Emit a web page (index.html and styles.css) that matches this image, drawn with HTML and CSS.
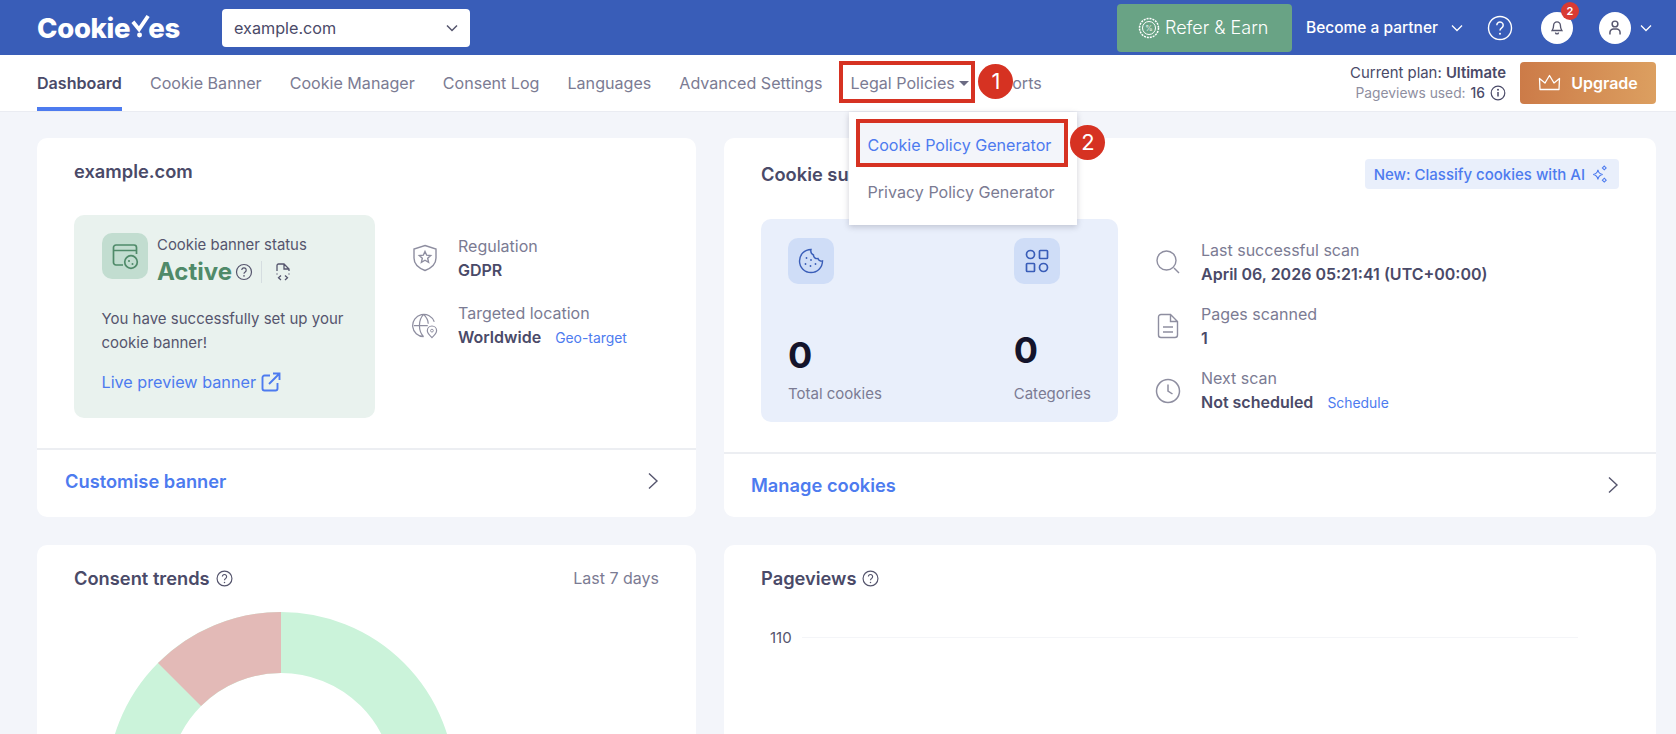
FILE: index.html
```html
<!DOCTYPE html>
<html>
	<head>
		<meta charset="utf-8">
		<title>CookieYes Dashboard</title>
		<link rel="stylesheet" href="styles.css">
	</head>
	<body>

		<header class="top-bar">
			<a class="logo">Cookie<svg class="logo-y" viewBox="0 0 20 24"><path d="M2 7l6.500 8L18 1" fill="none" stroke="#fff" stroke-width="4"/><circle cx="9" cy="21" r="2.600" fill="#fff"/></svg>es</a>
			<div class="site-select">
				<span>example.com</span>
				<svg class="chev" width="12" height="8" viewBox="0 0 12 8"><path d="M1 1.500l5 5 5-5" fill="none" stroke="#55556d" stroke-width="1.500"/></svg>
			</div>
			<div class="top-right">
				<a class="refer-btn">
					<svg width="22" height="22" viewBox="0 0 22 22"><circle cx="11" cy="11" r="9.500" fill="none" stroke="#fff" stroke-width="1.500" stroke-dasharray="2 1"/><circle cx="11" cy="11" r="6.500" fill="none" stroke="#fff"/><text x="11" y="14" text-anchor="middle" class="refer-pct">%</text></svg>
					Refer &amp; Earn
				</a>
				<a class="partner">Become a partner
					<svg class="chev" width="12" height="8" viewBox="0 0 12 8"><path d="M1 1.500l5 5 5-5" fill="none" stroke="#fff" stroke-width="1.300"/></svg>
				</a>
				<svg class="help-icon" width="26" height="26" viewBox="0 0 26 26"><circle cx="13" cy="13" r="11.500" fill="none" stroke="#fff" stroke-width="1.400"/><path d="M9.800 10.200a3.200 3.200 0 1 1 4.900 2.700c-1.100.7-1.700 1.300-1.700 2.600" fill="none" stroke="#fff" stroke-width="1.500"/><circle cx="13" cy="18.700" r="1" fill="#fff"/></svg>
				<div class="bell">
					<svg width="12" height="15" viewBox="0 0 16 18"><path d="M8 1.500a4.500 4.500 0 0 0-4.500 4.500c0 4-1 5.500-2 7h13c-1-1.500-2-3-2-7A4.500 4.500 0 0 0 8 1.500zM6 15.500a2 2 0 0 0 4 0" fill="none" stroke="#55556d" stroke-width="1.800"/></svg>
					<span class="bell-count">2</span>
				</div>
				<div class="avatar">
					<svg width="14" height="17" viewBox="0 0 18 20"><circle cx="9" cy="5.500" r="3.700" fill="none" stroke="#55556d" stroke-width="1.900"/><path d="M2.500 19v-2.500a4.500 4.500 0 0 1 4.500-4.500h4a4.500 4.500 0 0 1 4.500 4.500V19" fill="none" stroke="#55556d" stroke-width="1.900"/></svg>
				</div>
				<svg class="chev" width="12" height="8" viewBox="0 0 12 8"><path d="M1 1.500l5 5 5-5" fill="none" stroke="#fff" stroke-width="1.300"/></svg>
			</div>
		</header>

		<nav class="main-nav">
			<a class="nav-item nav-active">Dashboard</a>
			<a class="nav-item">Cookie Banner</a>
			<a class="nav-item">Cookie Manager</a>
			<a class="nav-item">Consent Log</a>
			<a class="nav-item">Languages</a>
			<a class="nav-item">Advanced Settings</a>
			<div class="nav-item nav-legal">
				Legal Policies<i class="caret"></i>
				<span class="mark-box mark-box-nav"></span>
				<span class="mark-num mark-num-1">1</span>
				<div class="legal-menu">
					<a class="legal-menu-item legal-menu-on">Cookie Policy Generator
						<span class="mark-box mark-box-menu"></span>
						<span class="mark-num mark-num-2">2</span>
					</a>
					<a class="legal-menu-item">Privacy Policy Generator</a>
				</div>
			</div>
			<a class="nav-item">Reports</a>

			<div class="plan-info">
				<p class="plan-name">Current plan: <b>Ultimate</b></p>
				<p class="plan-views">Pageviews used: <b>16</b>
					<svg width="16" height="16" viewBox="0 0 16 16"><circle cx="8" cy="8" r="6.800" fill="none" stroke="#4a4a68" stroke-width="1.200"/><path d="M8 7v4.500" stroke="#4a4a68" stroke-width="1.500"/><circle cx="8" cy="4.800" r="1" fill="#4a4a68"/></svg>
				</p>
			</div>
			<a class="upgrade-btn">
				<svg width="23" height="18" viewBox="0 0 23 18"><path d="M2 15.500L1.500 4.500l5.500 4.500 4.500-7.500 4.500 7.500 5.500-4.500-.5 11z" fill="none" stroke="#fff" stroke-width="1.300" stroke-linejoin="round"/></svg>
				Upgrade
			</a>
		</nav>

		<main class="dash-grid">

			<section class="card">
				<div class="card-main">
					<h2 class="card-title title-site">example.com</h2>
					<div class="site-row">
						<div class="status-panel">
							<div class="status-head">
								<div class="icon-tile tile-green">
									<svg width="28" height="28" viewBox="0 0 28 28"><path d="M12 23H5a2.500 2.500 0 0 1-2.500-2.500v-15A2.500 2.500 0 0 1 5 3h18a2.500 2.500 0 0 1 2.500 2.500V12M2.500 8.500h23" fill="none" stroke="#4f8a69" stroke-width="1.700"/><circle cx="20" cy="20" r="6.300" fill="none" stroke="#4f8a69" stroke-width="1.700"/><circle cx="18" cy="19" r="1" fill="#4f8a69"/><circle cx="21.500" cy="22" r="1" fill="#4f8a69"/></svg>
								</div>
								<div>
									<p class="status-label">Cookie banner status</p>
									<p class="status-value">Active
										<svg class="status-q" width="18" height="18" viewBox="0 0 18 18"><circle cx="9" cy="9" r="7.500" fill="none" stroke="#55556d" stroke-width="1.200"/><path d="M6.800 7a2.200 2.200 0 1 1 3.400 1.900c-.8.500-1.200.9-1.200 1.800" fill="none" stroke="#55556d" stroke-width="1.200"/><circle cx="9" cy="12.900" r=".8" fill="#55556d"/></svg>
										<i class="status-sep"></i>
										<svg width="16" height="18" viewBox="0 0 16 18"><path d="M2 8V2.500A1.500 1.500 0 0 1 3.500 1H9l5 5v2M9 1v5h5" fill="none" stroke="#55556d" stroke-width="1.300"/><path d="M2 10.500v1M14 10.500v1" stroke="#55556d" stroke-width="1.300"/><path d="M6 12.500l-2.500 2.300L6 17M10 12.500l2.500 2.300L10 17" fill="none" stroke="#55556d" stroke-width="1.300"/></svg>
									</p>
								</div>
							</div>
							<p class="status-text">You have successfully set up your cookie banner!</p>
							<a class="status-link">Live preview banner
								<svg width="20" height="20" viewBox="0 0 20 20"><path d="M9 3.500H3.500a2 2 0 0 0-2 2v11a2 2 0 0 0 2 2h11a2 2 0 0 0 2-2V11M8 12L18.500 1.500M12 1.500h6.500V8" fill="none" stroke="#4d7bef" stroke-width="1.900"/></svg>
							</a>
						</div>
						<div class="info-list info-site">
							<div class="info-row">
								<svg class="info-icon" width="26" height="28" viewBox="0 0 26 28"><path d="M13 1.500l11 3.500v9c0 6-4.500 10-11 12.500C6.500 24 2 20 2 14V5z" fill="none" stroke="#8e8ea0" stroke-width="1.400"/><path d="M13 7.500l1.700 3.700 4 .4-3 2.700.9 4L13 16.200l-3.600 2.100.9-4-3-2.700 4-.4z" fill="none" stroke="#8e8ea0" stroke-width="1.400"/></svg>
								<div>
									<p class="info-label">Regulation</p>
									<p class="info-value">GDPR</p>
								</div>
							</div>
							<div class="info-row">
								<svg class="info-icon" width="26" height="26" viewBox="0 0 28 28"><path d="M24 9.500A12 12 0 1 0 12.500 25.500M2 13.500h15M12.500 1.500c-6 6-6 18 0 24M12.500 1.500c3.500 3.500 5 7.500 5 10" fill="none" stroke="#8e8ea0" stroke-width="1.300"/><path d="M21.500 26.500c-3-3-5-5-5-7.500a5 5 0 0 1 10 0c0 2.500-2 4.500-5 7.500z" fill="none" stroke="#8e8ea0" stroke-width="1.300"/><circle cx="21.500" cy="19" r="1.500" fill="none" stroke="#8e8ea0"/></svg>
								<div>
									<p class="info-label">Targeted location</p>
									<p class="info-value">Worldwide <a class="info-link">Geo-target</a></p>
								</div>
							</div>
						</div>
					</div>
				</div>
				<a class="card-foot foot-site">Customise banner
					<svg width="12" height="18" viewBox="0 0 12 18"><path d="M2 1.500L10 9l-8 7.500" fill="none" stroke="#55556d" stroke-width="1.400"/></svg>
				</a>
			</section>

			<section class="card">
				<div class="card-main card-main-scan">
					<div class="scan-head">
						<h2 class="card-title">Cookie summary</h2>
						<span class="ai-pill">New: Classify cookies with AI
							<svg width="17" height="18" viewBox="0 0 16 17"><path d="M6.500 4.500c.5 3 1.500 4 4.500 4.500-3 .5-4 1.500-4.500 4.500C6 10.500 5 9.500 2 9c3-.5 4-1.500 4.500-4.500z" fill="none" stroke="#4d7bef" stroke-width="1.100"/><path d="M12.500 1l1.800 1.800-1.800 1.800-1.800-1.800zM12.500 12.500l1.800 1.800-1.800 1.800-1.800-1.800z" fill="none" stroke="#4d7bef"/></svg>
						</span>
					</div>
					<div class="scan-row">
						<div class="stats-panel">
							<div class="stat">
								<div class="icon-tile tile-blue">
									<svg width="26" height="26" viewBox="0 0 26 26"><path d="M13 1.500a11.500 11.500 0 1 0 11.500 11.500c-2 .5-4-.5-4.500-2.500-2.500.5-4.500-1-4.500-3.500C13.500 6 12.500 3.500 13 1.500z" fill="none" stroke="#395db8" stroke-width="1.400"/><g fill="#395db8"><circle cx="8.500" cy="10" r=".9"/><circle cx="13" cy="12" r=".9"/><circle cx="7.500" cy="16" r=".9"/><circle cx="12.500" cy="18" r=".9"/><circle cx="17.500" cy="16" r=".9"/></g></svg>
								</div>
								<p class="stat-num">0</p>
								<p class="stat-label">Total cookies</p>
							</div>
							<div class="stat stat-cats">
								<div class="icon-tile tile-blue">
									<svg width="24" height="24" viewBox="0 0 24 24"><g fill="none" stroke="#395db8" stroke-width="1.700"><circle cx="5.500" cy="5.500" r="4"/><rect x="14.500" y="1.500" width="8" height="8" rx=".8"/><rect x="1.500" y="14.500" width="8" height="8" rx=".8"/><circle cx="18.500" cy="18.500" r="4"/></g></svg>
								</div>
								<p class="stat-num">0</p>
								<p class="stat-label">Categories</p>
							</div>
						</div>
						<div class="info-list info-scan">
							<div class="info-row">
								<svg class="info-icon" width="26" height="26" viewBox="0 0 26 26"><circle cx="11.500" cy="11.500" r="9.500" fill="none" stroke="#8e8ea0" stroke-width="1.400"/><path d="M19 19l5 5" stroke="#8e8ea0" stroke-width="1.400"/></svg>
								<div>
									<p class="info-label">Last successful scan</p>
									<p class="info-value">April 06, 2026 05:21:41 (UTC+00:00)</p>
								</div>
							</div>
							<div class="info-row">
								<svg class="info-icon" width="26" height="26" viewBox="0 0 26 26"><path d="M15.500 1.500H6a2.500 2.500 0 0 0-2.500 2.500v18A2.500 2.500 0 0 0 6 24.500h14a2.500 2.500 0 0 0 2.500-2.500V8.500zM15.500 1.500v7h7M8 14h10M8 19h10" fill="none" stroke="#8e8ea0" stroke-width="1.400"/></svg>
								<div>
									<p class="info-label">Pages scanned</p>
									<p class="info-value">1</p>
								</div>
							</div>
							<div class="info-row">
								<svg class="info-icon" width="26" height="26" viewBox="0 0 26 26"><circle cx="13" cy="13" r="11.500" fill="none" stroke="#8e8ea0" stroke-width="1.500"/><path d="M13 6.500V13l4.500 3" fill="none" stroke="#8e8ea0" stroke-width="1.500"/></svg>
								<div>
									<p class="info-label">Next scan</p>
									<p class="info-value">Not scheduled <a class="info-link">Schedule</a></p>
								</div>
							</div>
						</div>
					</div>
				</div>
				<a class="card-foot foot-scan">Manage cookies
					<svg width="12" height="18" viewBox="0 0 12 18"><path d="M2 1.500L10 9l-8 7.500" fill="none" stroke="#55556d" stroke-width="1.400"/></svg>
				</a>
			</section>

			<section class="card card-low">
				<div class="chart-head">
					<h2 class="card-title">Consent trends
						<svg width="17" height="17" viewBox="0 0 16 16"><circle cx="8" cy="8" r="7" fill="none" stroke="#55556d" stroke-width="1.100"/><path d="M6 6.200a2 2 0 1 1 3.100 1.700c-.7.400-1.100.8-1.100 1.700" fill="none" stroke="#55556d" stroke-width="1.100"/><circle cx="8" cy="11.700" r=".7" fill="#55556d"/></svg>
					</h2>
					<span class="chart-range">Last 7 days</span>
				</div>
				<svg class="donut" width="348" height="348" viewBox="-174 -174 348 348">
					<circle r="143.500" fill="none" stroke="#cbf3da" stroke-width="61"/>
					<path d="M0-174A174 174 0 0 0-123-123L-80-80A113 113 0 0 1 0-113z" fill="#e3bab7"/>
				</svg>
			</section>

			<section class="card card-low">
				<div class="chart-head">
					<h2 class="card-title">Pageviews
						<svg width="17" height="17" viewBox="0 0 16 16"><circle cx="8" cy="8" r="7" fill="none" stroke="#55556d" stroke-width="1.100"/><path d="M6 6.200a2 2 0 1 1 3.100 1.700c-.7.400-1.100.8-1.100 1.700" fill="none" stroke="#55556d" stroke-width="1.100"/><circle cx="8" cy="11.700" r=".7" fill="#55556d"/></svg>
					</h2>
				</div>
				<div class="chart-line">
					<span>110</span>
					<i></i>
				</div>
			</section>

		</main>

	</body>
</html>
```

FILE: styles.css
```css
*{
	box-sizing: border-box;
}
body{
	margin: 0;
	height: 734px;
	overflow: hidden;
	background: #f3f5fa;
	font-family: "Inter", "Liberation Sans", sans-serif;
	color: #4a4a68;
}
p, h2{
	margin: 0;
}

/* top bar */
.top-bar{
	display: flex;
	align-items: center;
	height: 55px;
	padding-left: 37px;
	background: #395db8;
}
.logo{
	display: flex;
	align-items: center;
	width: 185px;
	font-size: 27.500px;
	font-weight: 800;
	letter-spacing: -0.3px;
	color: #fff;
}
.logo-y{
	width: 19px;
	height: 23px;
	margin: -3px -2px 0 1px;
}
.site-select{
	display: flex;
	align-items: center;
	justify-content: space-between;
	width: 248px;
	height: 38px;
	padding: 0 12px;
	border-radius: 4px;
	background: #fff;
	font-size: 16.200px;
}
.top-right{
	display: flex;
	align-items: center;
	margin-left: auto;
	padding-right: 24px;
}
.refer-btn{
	display: flex;
	align-items: center;
	gap: 5px;
	width: 175px;
	height: 48px;
	padding-left: 21px;
	border-radius: 4px;
	background: #69a385;
	font-size: 18px;
	font-weight: 300;
	color: #fff;
}
.refer-pct{
	font-size: 8px;
	fill: #fff;
}
.partner{
	display: flex;
	align-items: center;
	gap: 13px;
	margin-left: 14px;
	font-size: 15.500px;
	font-weight: 500;
	color: #fff;
}
.help-icon{
	margin-left: 24px;
}
.bell{
	position: relative;
	display: flex;
	align-items: center;
	justify-content: center;
	width: 32px;
	height: 32px;
	margin-left: 28px;
	border-radius: 50%;
	background: #fff;
}
.bell-count{
	position: absolute;
	top: -10px;
	right: -6px;
	width: 18px;
	height: 18px;
	line-height: 18px;
	text-align: center;
	border-radius: 50%;
	background: #d93a32;
	font-size: 11px;
	font-weight: 600;
	color: #fff;
}
.avatar{
	display: flex;
	align-items: center;
	justify-content: center;
	width: 32px;
	height: 32px;
	margin: 0 9px 0 26px;
	border-radius: 50%;
	background: #fff;
}

/* nav */
.main-nav{
	display: flex;
	align-items: center;
	gap: 28px;
	height: 57px;
	padding: 0 20px 0 37px;
	background: #fff;
	border-bottom: 1px solid #eaecf2;
}
.nav-item{
	position: relative;
	display: flex;
	align-items: center;
	height: 56px;
	font-size: 16.100px;
	color: #7b7b93;
	white-space: nowrap;
}
.nav-active{
	font-weight: 600;
	color: #4a4a68;
	border-bottom: 4px solid #4d7bef;
	padding-top: 4px;
}
.nav-legal{
	margin-right: -14px;
}
.caret{
	width: 0;
	height: 0;
	margin-left: 4px;
	border: 5px solid transparent;
	border-top: 5px solid #6b6b83;
	border-bottom: 0;
}
.mark-box{
	position: absolute;
	border: 4px solid #d63222;
	pointer-events: none;
}
.mark-box-nav{
	left: -11px;
	right: -6px;
	top: 6px;
	bottom: 8px;
}
.mark-num{
	position: absolute;
	width: 35px;
	height: 35px;
	line-height: 35px;
	text-align: center;
	border-radius: 50%;
	background: #d63222;
	font-size: 22px;
	color: #fff;
	z-index: 6;
}
.mark-num-1{
	left: 128px;
	top: 9px;
}
.mark-num-2{
	right: -37px;
	top: 6px;
}
.legal-menu{
	position: absolute;
	left: -1px;
	top: 57px;
	width: 228px;
	height: 113px;
	padding: 7px 9px 7px 7px;
	background: #fff;
	box-shadow: 0 2px 6px rgba(40, 40, 70, 0.22);
	z-index: 5;
}
.legal-menu-item{
	position: relative;
	display: block;
	height: 48px;
	line-height: 50px;
	padding-left: 11px;
	font-size: 16.100px;
	color: #7b7b93;
}
.legal-menu-on{
	line-height: 52px;
	background: #f3f5fa;
	color: #4d7bef;
}
.mark-box-menu{
	left: 0;
	right: 0;
	top: 0;
	bottom: 0;
}
.plan-info{
	margin-left: auto;
	text-align: right;
	margin-right: -14px;
}
.plan-name{
	font-size: 14.900px;
	line-height: 20px;
}
.plan-views{
	display: flex;
	align-items: center;
	justify-content: flex-end;
	gap: 5px;
	font-size: 13.800px;
	line-height: 20px;
	color: #8e8ea0;
}
.plan-views b{
	font-weight: 500;
	color: #4a4a68;
}
.plan-name b{
	font-weight: 600;
}
.upgrade-btn{
	display: flex;
	align-items: center;
	justify-content: center;
	gap: 10px;
	width: 136px;
	height: 42px;
	border-radius: 4px;
	background: linear-gradient(90deg, #cc7b48, #dc9f60);
	font-size: 16px;
	font-weight: 600;
	color: #fff;
}

/* cards */
.dash-grid{
	display: grid;
	grid-template-columns: 659px 932px;
	grid-template-rows: 379px 400px;
	column-gap: 28px;
	row-gap: 28px;
	padding: 26px 20px 0 37px;
}
.card{
	display: flex;
	flex-direction: column;
	border-radius: 10px;
	background: #fff;
}
.card-main{
	padding: 21px 37px 30px;
	border-bottom: 2px solid #eceef2;
}
.card-title{
	display: flex;
	align-items: center;
	gap: 6px;
	height: 24px;
	font-size: 18.300px;
	font-weight: 600;
	color: #4a4a68;
}
.title-site{
	margin-bottom: 32px;
}
.site-row, .scan-row{
	display: flex;
}
.status-panel{
	width: 301px;
	height: 203px;
	padding: 18px 27.500px;
	border-radius: 10px;
	background: #e9f2ee;
}
.status-head{
	display: flex;
	gap: 9.500px;
}
.icon-tile{
	display: flex;
	align-items: center;
	justify-content: center;
	width: 46px;
	height: 46px;
	border-radius: 10px;
}
.tile-green{
	background: #c2ddd0;
}
.tile-blue{
	background: #cfddf7;
}
.status-label{
	font-size: 14.900px;
	line-height: 24px;
	color: #55556d;
}
.status-value{
	display: flex;
	align-items: center;
	margin-top: 2px;
	font-size: 24px;
	line-height: 26px;
	font-weight: 700;
	color: #4f8a69;
}
.status-q{
	margin-left: 3px;
}
.status-sep{
	width: 1px;
	height: 22px;
	margin: 0 13px 0 8px;
	background: #d5dde0;
}
.status-text{
	margin-top: 22px;
	font-size: 15px;
	line-height: 23.500px;
	color: #55556d;
}
.status-link{
	display: flex;
	align-items: center;
	gap: 5px;
	margin-top: 18px;
	font-size: 16.200px;
	color: #4d7bef;
}
.info-list{
	display: flex;
	flex-direction: column;
}
.info-site{
	margin: 19px 0 0 37px;
	gap: 19px;
}
.info-scan{
	margin: 19px 0 0 37px;
	gap: 16px;
}
.info-row{
	display: flex;
	align-items: center;
	gap: 20px;
}
.info-icon{
	flex: none;
}
.info-label{
	font-size: 16px;
	line-height: 24px;
	color: #7b7b93;
}
.info-value{
	font-size: 16px;
	line-height: 24px;
	font-weight: 600;
	color: #4a4a68;
	white-space: nowrap;
}
.info-link{
	margin-left: 10px;
	font-size: 13.900px;
	font-weight: 400;
	color: #4d7bef;
}
.card-foot{
	flex: 1;
	display: flex;
	align-items: center;
	justify-content: space-between;
	font-size: 18.300px;
	font-weight: 600;
	color: #4d7bef;
}
.foot-site{
	padding: 0 37px 6px 28px;
}
.foot-scan{
	padding: 0 37px 2px 27px;
}
.scan-head{
	display: flex;
	align-items: center;
	justify-content: space-between;
	height: 30px;
	margin-bottom: 30px;
}
.ai-pill{
	display: flex;
	align-items: center;
	gap: 6px;
	height: 30px;
	padding: 0 11px 0 9px;
	border-radius: 4px;
	background: #e9effb;
	font-size: 15px;
	font-weight: 500;
	color: #4d7bef;
}
.stats-panel{
	display: flex;
	width: 357px;
	height: 203px;
	padding: 19px 27px;
	border-radius: 10px;
	background: #e9effb;
}
.stat{
	width: 226px;
}
.stat-cats{
	width: auto;
}
.stat-num{
	margin-top: 49px;
	font-size: 36px;
	line-height: 44px;
	font-weight: 700;
	color: #14142b;
}
.stat-cats .stat-num{
	margin-top: 44px;
}
.stat-label{
	margin-top: 6px;
	font-size: 15px;
	line-height: 22px;
	color: #7b7b93;
}
.stat-cats .stat-label{
	margin-top: 11px;
}
.chart-head{
	display: flex;
	align-items: center;
	justify-content: space-between;
	padding: 21px 37px 0;
}
.chart-range{
	font-size: 16px;
	color: #7b7b93;
}
.donut{
	flex: none;
	display: block;
	margin: 22px 0 0 70px;
}
.chart-line{
	display: flex;
	align-items: center;
	gap: 10px;
	margin-top: 38px;
	padding-left: 46px;
	font-size: 15px;
	color: #55556d;
}
.chart-line i{
	width: 776px;
	height: 1px;
	background: #f4f5f8;
}
```
